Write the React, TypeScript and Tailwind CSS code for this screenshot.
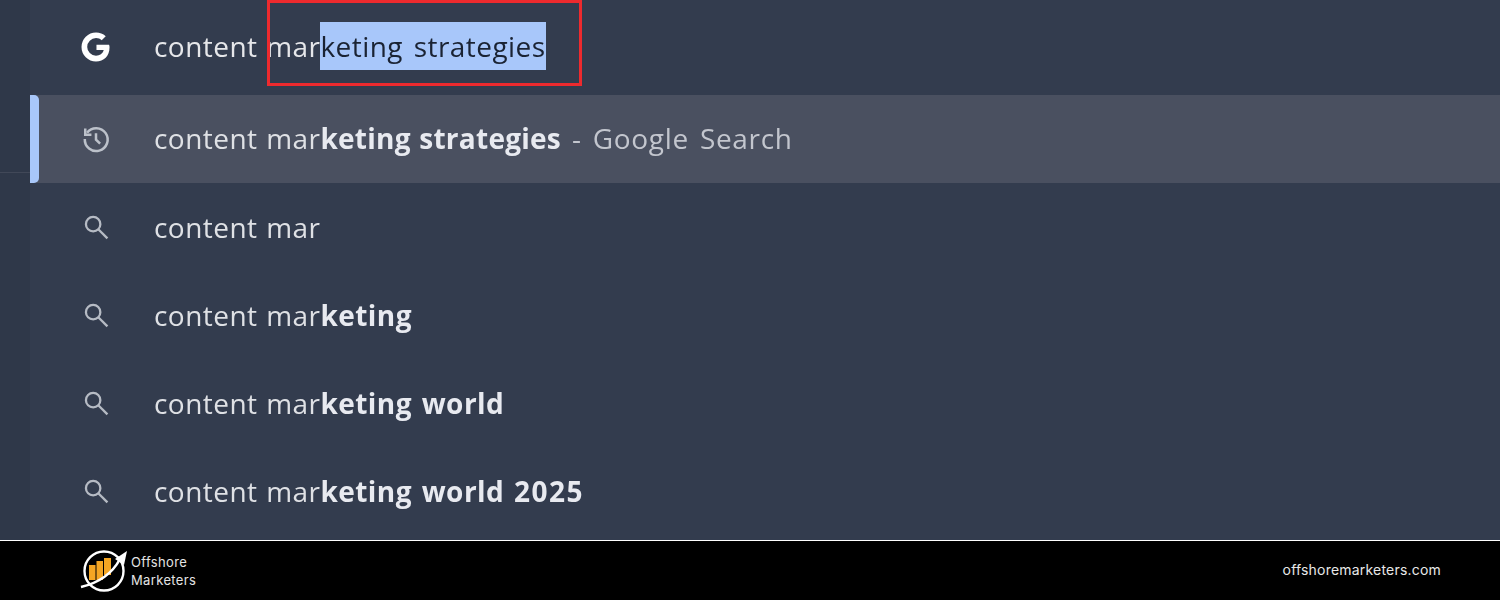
import React from "react";

const FONT = "font-['Open_Sans','Noto_Sans',sans-serif]";

function GoogleG() {
  return (
    <svg width="38" height="38" viewBox="0 0 32 32" aria-hidden="true">
      <path d="M27 14H16.400v4.600h6.100c-.8 3-3.300 4.700-6.500 4.700a7.400 7.400 0 0 1 0-14.800c1.900 0 3.500.7 4.800 1.800l3.400-3.400A12.200 12.200 0 0 0 16 3.800 12.200 12.200 0 1 0 16 28.200c6.600 0 11.400-4.500 11.400-12 0-.7-.1-1.500-.4-2.200z" fill="#ffffff" />
    </svg>
  );
}

function HistoryIcon() {
  return (
    <svg width="32" height="32" viewBox="0 0 28 28" fill="none" stroke="#bcc1ca" strokeWidth="2.200" aria-hidden="true">
      <path d="M6.200 8.500A10 10 0 1 1 4.200 14" />
      <path d="M4.600 4.800v5.400h5.400" />
      <path d="M14 9v5.600l3.600 3.400" />
    </svg>
  );
}

function SearchIcon() {
  return (
    <svg width="32" height="32" viewBox="0 0 28 28" fill="none" stroke="#b6bbc4" strokeWidth="2" aria-hidden="true">
      <circle cx="11.500" cy="11.500" r="6.300" />
      <path d="M16 16l8 8" />
    </svg>
  );
}

function Logo() {
  return (
    <svg width="50" height="50" viewBox="0 0 50 50" aria-hidden="true">
      <circle cx="24" cy="25" r="19.500" fill="none" stroke="#ffffff" strokeWidth="2.400" />
      <rect x="9" y="19" width="6.500" height="15" fill="#f5a623" />
      <rect x="16.500" y="15" width="6.500" height="19" fill="#f5a623" />
      <rect x="24" y="12" width="7" height="17" fill="#f5a623" />
      <path d="M1 41C18 37 32 28 40 13" fill="none" stroke="#ffffff" strokeWidth="2.600" />
      <path d="M35 13l12-8-3 14z" fill="#ffffff" />
    </svg>
  );
}

function Row({
  icon,
  selected,
  children,
}: {
  icon: React.ReactNode;
  selected?: boolean;
  children: React.ReactNode;
}) {
  return (
    <div className={`relative flex h-[88px] items-center ${selected ? "bg-[#4a5060]" : ""}`}>
      {selected && <div className="absolute left-0 top-0 h-full w-[9px] rounded-r-[5px] bg-[#a8c7fa]" />}
      <div className="flex w-[124px] shrink-0 justify-center pl-[8px]">{icon}</div>
      <div
        className={`whitespace-nowrap text-[28px] leading-[40px] tracking-[0.45px] [word-spacing:1px] text-[#dfe1e5] blur-[0.4px] ${
          selected ? "pb-[2px]" : ""
        }`}
      >
        {children}
      </div>
    </div>
  );
}

function B({ children }: { children: React.ReactNode }) {
  return <b className="font-bold text-[#e8eaf0] [word-spacing:2px]">{children}</b>;
}

export default function App() {
  return (
    <div className={`flex h-[600px] w-[1500px] flex-col overflow-hidden bg-black ${FONT}`}>
      <div className="relative flex h-[540px] shrink-0 bg-[#333c4e]">
        <div className="flex w-[30px] shrink-0 flex-col bg-[#2f3849]">
          <div className="mt-[172px] h-px bg-[#414858]" />
        </div>
        <div className="min-w-0 flex-1">
          <div className="flex h-[95px] items-center">
            <div className="flex w-[124px] shrink-0 justify-center pl-[8px] pb-[2px]">
              <GoogleG />
            </div>
            <div className="whitespace-nowrap pb-[3px] text-[28px] leading-[48px] tracking-[0.45px] [word-spacing:1px] text-[#e6e7ea] blur-[0.4px]">
              content mar
              <span className="inline-block bg-[#a8c7fa] text-[#1a2333] [word-spacing:3px]">keting strategies</span>
            </div>
          </div>
          <Row selected icon={<HistoryIcon />}>
            content mar
            <b className="font-bold tracking-[0.25px] text-[#e8eaf0]">keting strategies</b>
            <span className="tracking-[0.7px] [word-spacing:3px] text-[#c3c6ce]"> - Google Search</span>
          </Row>
          <Row icon={<SearchIcon />}>content mar</Row>
          <Row icon={<SearchIcon />}>
            content mar<B>keting</B>
          </Row>
          <Row icon={<SearchIcon />}>
            content mar<B>keting world</B>
          </Row>
          <Row icon={<SearchIcon />}>
            content mar<B>keting world <span className="tracking-[1.500px]">2025</span></B>
          </Row>
        </div>
        <div className="absolute left-[267px] top-0 h-[86px] w-[315px] border-[3px] border-[#ee2a2e]" />
      </div>
      <div className="h-px shrink-0 bg-white" />
      <div className="flex flex-1 items-center justify-between pl-[80px] pr-[59px]">
        <div className="flex items-center gap-[1px]">
          <Logo />
          <div className="font-['Inter',sans-serif] text-[13px] leading-[18px] tracking-[0.35px] text-[#e4e4e4]">
            <div>Offshore</div>
            <div>Marketers</div>
          </div>
        </div>
        <div className="pb-[2px] font-['Inter',sans-serif] text-[14px] tracking-[0.2px] text-[#e8e8e8]">offshoremarketers.com</div>
      </div>
    </div>
  );
}
